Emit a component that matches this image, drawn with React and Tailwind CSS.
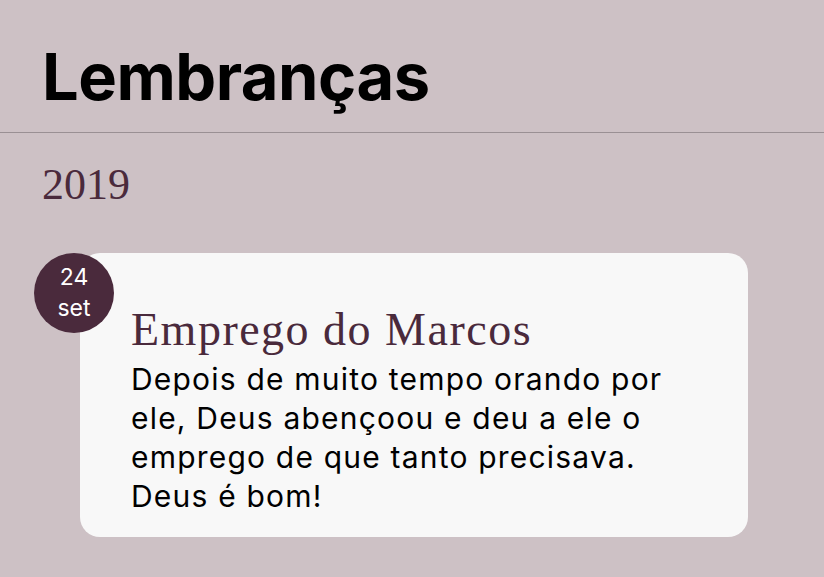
import React from "react";

const memories = [
  {
    id: 1,
    day: "24",
    month: "set",
    title: "Emprego do Marcos",
    body: "Depois de muito tempo orando por ele, Deus abençoou e deu a ele o emprego de que tanto precisava. Deus é bom!",
  },
];

function MemoryCard({ memory }) {
  return (
    <div className="relative ml-[80px] w-[668px]">
      {/* badge da data */}
      <div className="absolute left-[-46px] top-0 w-[80px] h-[80px] rounded-full bg-[#4a2a3c] flex flex-col items-center justify-center text-white text-[23px] leading-[31px] font-['Inter',sans-serif]">
        <span>{memory.day}</span>
        <span>{memory.month}</span>
      </div>
      <div className="bg-[#f8f8f8] rounded-[20px] pl-[51px] pr-[66px] pt-[52px] pb-[21px]">
        <h2 className="font-['Liberation_Serif',serif] text-[46px] leading-[50px] tracking-[1.5px] text-[#4a2a3c]">
          {memory.title}
        </h2>
        <p className="mt-[5px] font-['Inter',sans-serif] text-[30px] leading-[39px] tracking-[1.2px] text-black">
          {memory.body}
        </p>
      </div>
    </div>
  );
}

export default function App() {
  return (
    <div className="w-[824px] h-[577px] overflow-hidden bg-[#cdc1c5]">
      <header className="px-[42px] pt-[36px] pb-[14px] border-b border-[#9a9094]">
        <h1 className="font-['Inter',sans-serif] font-bold text-[65px] leading-[82px] tracking-[-0.5px] text-black">
          Lembranças
        </h1>
      </header>
      <section className="pt-[26px]">
        <h3 className="px-[42px] font-['Liberation_Serif',serif] text-[44px] leading-[52px] text-[#4a2a3c]">
          2019
        </h3>
        <div className="mt-[42px] space-y-6">
          {memories.map((m) => (
            <MemoryCard key={m.id} memory={m} />
          ))}
        </div>
      </section>
    </div>
  );
}
